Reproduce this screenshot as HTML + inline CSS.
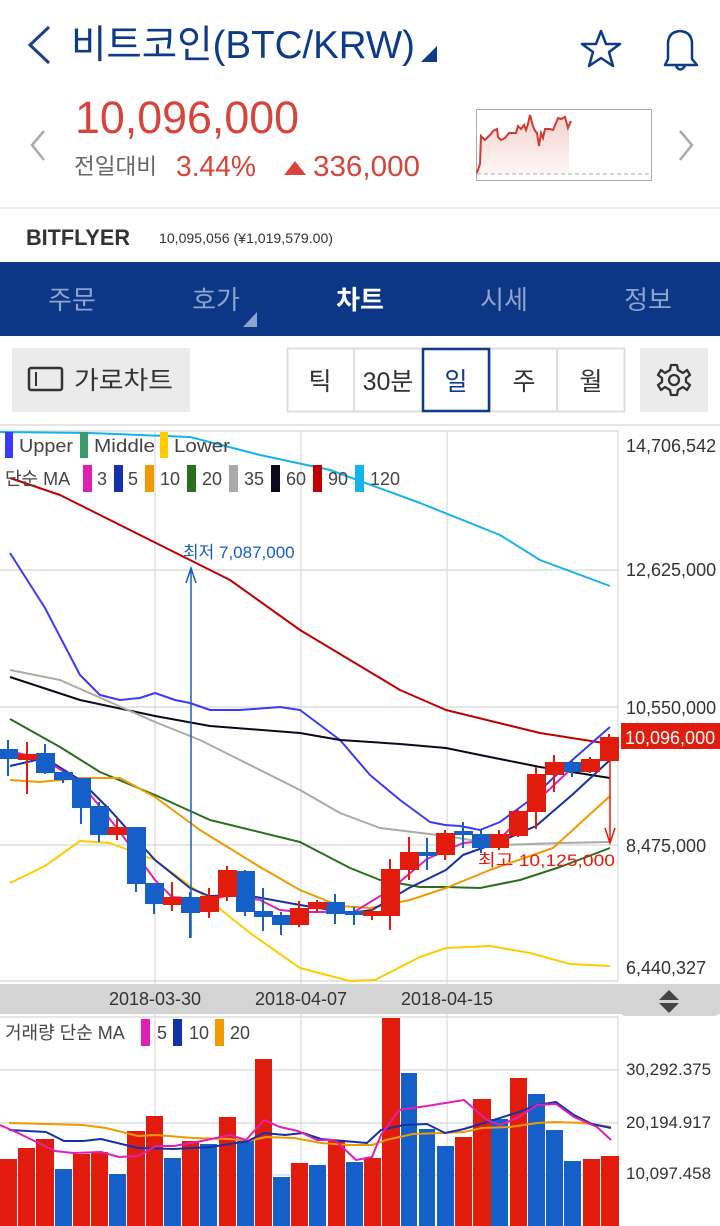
<!DOCTYPE html>
<html><head><meta charset="utf-8">
<style>
*{margin:0;padding:0;box-sizing:border-box}
body{width:720px;height:1226px;overflow:hidden;background:#fff;font-family:"Liberation Sans","Noto Sans CJK KR",sans-serif;position:relative}
.a{position:absolute;white-space:nowrap}
</style></head><body>
<svg class="a" style="left:0;top:0" width="720" height="1226" viewBox="0 0 720 1226" font-family="Liberation Sans, Noto Sans CJK KR, sans-serif">
<path d="M49 27 L30 45 L49 63" fill="none" stroke="#1a3f8f" stroke-width="3"/>
<text x="71" y="58" font-size="39" fill="#0e3a8a" textLength="344" lengthAdjust="spacingAndGlyphs">비트코인(BTC/KRW)</text>
<path d="M421 62 L437 62 L437 46 Z" fill="#0e3a8a"/>
<path d="M601 31 L606 44 L620 44 L609 52 L613 66 L601 58 L589 66 L593 52 L582 44 L596 44 Z" fill="none" stroke="#0e3a8a" stroke-width="2.5" stroke-linejoin="round"/>
<path d="M665 65 L668 59 L668 44 Q668 32 680 31 Q692 32 692 44 L692 59 L697 65 Z M676 66 Q680 73 685 66" fill="none" stroke="#0e3a8a" stroke-width="2.5" stroke-linejoin="round"/>
<path d="M44 131 L32 145 L44 160" fill="none" stroke="#aaa" stroke-width="2.5"/>
<path d="M680 131 L692 145 L680 160" fill="none" stroke="#aaa" stroke-width="2.5"/>
<text x="75" y="133" font-size="45" fill="#d9443a" textLength="224" lengthAdjust="spacingAndGlyphs">10,096,000</text>
<text x="74" y="174" font-size="22" fill="#666" textLength="83" lengthAdjust="spacingAndGlyphs">전일대비</text>
<text x="176" y="176" font-size="29" fill="#d9443a" textLength="80" lengthAdjust="spacingAndGlyphs">3.44%</text>
<path d="M284 175 L295 161 L306 175 Z" fill="#d9443a"/>
<text x="313" y="176" font-size="29" fill="#d9443a" textLength="107" lengthAdjust="spacingAndGlyphs">336,000</text>
<rect x="476.5" y="109.5" width="175" height="71" fill="#fff" stroke="#aaa"/>
<defs><linearGradient id="g" x1="0" y1="0" x2="0" y2="1"><stop offset="0" stop-color="#f3d3cf"/><stop offset="1" stop-color="#fdf5f4"/></linearGradient></defs>
<path d="M477 173 L480 164 L481 136 L485 140 L491 134 L493 131 L497 129 L498 137 L501 140 L505 138 L509 133 L513 133 L516 133 L518 126 L521 129 L524 125 L526 130 L528 124 L530 115 L533 126 L535 131 L537 133 L539 146 L541 133 L543 138 L545 129 L550 129 L553 130 L556 123 L558 118 L561 119 L565 117 L568 128 L571 121 L569 121 L569 173 Z" fill="url(#g)"/>
<path d="M477 173 L480 164 L481 136 L485 140 L491 134 L493 131 L497 129 L498 137 L501 140 L505 138 L509 133 L513 133 L516 133 L518 126 L521 129 L524 125 L526 130 L528 124 L530 115 L533 126 L535 131 L537 133 L539 146 L541 133 L543 138 L545 129 L550 129 L553 130 L556 123 L558 118 L561 119 L565 117 L568 128 L571 121" fill="none" stroke="#d23a2f" stroke-width="2"/>
<line x1="477" y1="174" x2="651" y2="174" stroke="#aaa" stroke-dasharray="4,3"/>
<rect x="0" y="207" width="720" height="2" fill="#eee"/>
<text x="26" y="245" font-size="22" font-weight="bold" fill="#333" textLength="104" lengthAdjust="spacingAndGlyphs">BITFLYER</text>
<text x="159" y="243" font-size="14" fill="#333" textLength="174" lengthAdjust="spacingAndGlyphs">10,095,056 (¥1,019,579.00)</text>
<rect x="0" y="262" width="720" height="74" fill="#0b3786"/>
<g font-size="26" fill="#8ea4cc" text-anchor="middle">
<text x="72" y="309">주문</text><text x="216" y="309">호가</text><text x="504" y="309">시세</text><text x="648" y="309">정보</text></g>
<text x="360" y="309" font-size="26" fill="#fff" font-weight="bold" text-anchor="middle">차트</text>
<path d="M243 327 L257 327 L257 312 Z" fill="#8ea4cc"/>
<rect x="12" y="348" width="178" height="64" fill="#ebebeb"/>
<rect x="29" y="368" width="33" height="22" rx="2" fill="none" stroke="#333" stroke-width="2.5"/>
<line x1="36" y1="372" x2="36" y2="386" stroke="#333" stroke-width="2"/>
<text x="74" y="389" font-size="25" fill="#333" textLength="99" lengthAdjust="spacingAndGlyphs">가로차트</text>
<rect x="287.5" y="348.5" width="337" height="63" fill="#fff" stroke="#ddd" stroke-width="2"/>
<line x1="354" y1="349" x2="354" y2="411" stroke="#ddd" stroke-width="2"/>
<line x1="557" y1="349" x2="557" y2="411" stroke="#ddd" stroke-width="2"/>
<line x1="490" y1="349" x2="490" y2="411" stroke="#ddd" stroke-width="2"/>
<rect x="423" y="349" width="66" height="62" fill="none" stroke="#0e3a8a" stroke-width="2.5"/>
<g font-size="25" fill="#333" text-anchor="middle"><text x="320" y="390">틱</text><text x="388" y="390">30분</text><text x="524" y="390">주</text><text x="591" y="390">월</text></g>
<text x="456" y="390" font-size="25" fill="#0e3a8a" text-anchor="middle">일</text>
<rect x="640" y="348" width="68" height="64" fill="#ebebeb"/>
<g transform="translate(674,380)" fill="none" stroke="#333" stroke-width="2.3">
<circle r="5"/>
<path d="M-3 -15 L3 -15 L4 -10 L9 -7 L13 -10 L16 -5 L12 -2 L12 2 L16 5 L13 10 L9 7 L4 10 L3 15 L-3 15 L-4 10 L-9 7 L-13 10 L-16 5 L-12 2 L-12 -2 L-16 -5 L-13 -10 L-9 -7 L-4 -10 Z" stroke-linejoin="round"/></g>
<rect x="0" y="424" width="720" height="2" fill="#e6e6e6"/>
<g stroke="#d8d8d8" stroke-width="1.2">
<line x1="0" y1="431" x2="618" y2="431"/>
<line x1="0" y1="570" x2="618" y2="570"/><line x1="0" y1="707" x2="618" y2="707"/><line x1="0" y1="845" x2="618" y2="845"/>
<line x1="0" y1="981" x2="618" y2="981"/>
<line x1="155" y1="431" x2="155" y2="1224"/><line x1="301" y1="431" x2="301" y2="1224"/><line x1="447" y1="431" x2="447" y2="1224"/>
<line x1="618" y1="431" x2="618" y2="981"/>
<line x1="618" y1="1016" x2="618" y2="1226"/>
<line x1="0" y1="1070" x2="618" y2="1070"/><line x1="0" y1="1123" x2="618" y2="1123"/><line x1="0" y1="1175" x2="618" y2="1175"/>
<line x1="0" y1="1017" x2="618" y2="1017"/>
</g>
<g font-size="18" fill="#333"><text x="626" y="452">14,706,542</text><text x="626" y="576">12,625,000</text><text x="626" y="714">10,550,000</text><text x="626" y="852">8,475,000</text><text x="626" y="974">6,440,327</text></g>
<g fill="none" stroke-width="2" stroke-linejoin="round">
<polyline stroke="#13b3ec" points="0,432 90,433 190,437 260,455 330,470 420,503 500,535 540,560 610,586"/>
<polyline stroke="#c00000" points="10,478 60,495 100,515 150,540 230,580 300,630 350,660 400,690 446,710 540,733 610,744"/>
<polyline stroke="#3a3aff" points="10,553 45,608 80,675 100,695 120,700 140,698 155,693 175,700 190,703 210,710 240,710 280,707 300,710 340,740 370,775 400,800 430,822 445,825 460,826 480,830 500,822 530,800 570,762 610,727"/>
<polyline stroke="#0a0a1a" points="10,677 80,700 155,716 210,726 300,733 340,740 400,744 446,748 480,755 540,767 610,778"/>
<polyline stroke="#aaaaaa" points="10,670 60,680 155,722 200,740 240,760 300,790 340,813 380,828 446,836 500,845 560,843 610,842"/>
<polyline stroke="#2a6e1f" points="10,719 60,747 100,772 155,795 210,820 300,842 350,868 380,880 420,887 446,887 480,888 520,880 560,867 610,848"/>
<polyline stroke="#ee9a00" points="10,780 40,782 80,778 120,778 155,797 200,830 260,867 300,890 340,906 370,908 410,900 446,888 490,870 553,848 610,796"/>
<polyline stroke="#ffcc00" points="10,883 45,866 80,841 110,843 155,860 200,893 250,933 300,968 350,981 375,980 420,957 446,948 490,946 530,953 570,964 610,966"/>
<polyline stroke="#1530a8" points="10,766 45,758 80,780 110,810 155,860 190,888 209,896 245,895 300,905 350,913 372,910 409,888 446,870 463,855 499,842 536,826 572,795 610,760"/>
<polyline stroke="#e020b0" points="10,751 45,760 80,782 117,828 155,880 172,897 209,900 230,895 260,900 280,910 300,912 354,912 390,890 427,859 463,843 499,840 536,802 572,768 610,757"/>
</g>
<g stroke-width="2">
<g stroke="#1560c8" fill="#1560c8">
<line x1="8" y1="740" x2="8" y2="776"/><rect x="0" y="750" width="17" height="8"/>
<line x1="45" y1="744" x2="45" y2="774"/><rect x="37" y="754" width="17" height="18"/>
<line x1="63" y1="770" x2="63" y2="783"/><rect x="55" y="773" width="17" height="6"/>
<line x1="81" y1="779" x2="81" y2="824"/><rect x="73" y="779" width="17" height="28"/>
<line x1="99" y1="802" x2="99" y2="842"/><rect x="91" y="807" width="17" height="27"/>
<line x1="136" y1="828" x2="136" y2="892"/><rect x="128" y="828" width="17" height="55"/>
<line x1="154" y1="884" x2="154" y2="914"/><rect x="146" y="884" width="17" height="19"/>
<line x1="190" y1="892" x2="190" y2="938"/><rect x="182" y="898" width="17" height="14"/>
<line x1="245" y1="870" x2="245" y2="916"/><rect x="237" y="872" width="17" height="39"/>
<line x1="263" y1="888" x2="263" y2="931"/><rect x="255" y="912" width="17" height="4"/>
<line x1="281" y1="912" x2="281" y2="935"/><rect x="273" y="916" width="17" height="8"/>
<line x1="335" y1="894" x2="335" y2="924"/><rect x="327" y="903" width="17" height="10"/>
<line x1="354" y1="907" x2="354" y2="925"/><rect x="346" y="912" width="17" height="2"/>
<line x1="427" y1="838" x2="427" y2="870"/><rect x="419" y="853" width="17" height="2"/>
<line x1="463" y1="822" x2="463" y2="848"/><rect x="455" y="832" width="17" height="2"/>
<line x1="481" y1="830" x2="481" y2="853"/><rect x="473" y="835" width="17" height="12"/>
<line x1="572" y1="760" x2="572" y2="777"/><rect x="564" y="763" width="17" height="8"/>
</g>
<g stroke="#e21c0d" fill="#e21c0d">
<line x1="27" y1="742" x2="27" y2="794"/><rect x="19" y="755" width="17" height="4"/>
<line x1="117" y1="819" x2="117" y2="840"/><rect x="109" y="828" width="17" height="6"/>
<line x1="172" y1="882" x2="172" y2="911"/><rect x="164" y="898" width="17" height="6"/>
<line x1="209" y1="888" x2="209" y2="918"/><rect x="201" y="897" width="17" height="14"/>
<line x1="227" y1="866" x2="227" y2="901"/><rect x="219" y="871" width="17" height="25"/>
<line x1="299" y1="901" x2="299" y2="927"/><rect x="291" y="909" width="17" height="15"/>
<line x1="317" y1="900" x2="317" y2="913"/><rect x="309" y="903" width="17" height="5"/>
<line x1="372" y1="909" x2="372" y2="920"/><rect x="364" y="912" width="17" height="3"/>
<line x1="390" y1="859" x2="390" y2="930"/><rect x="382" y="870" width="17" height="45"/>
<line x1="409" y1="837" x2="409" y2="880"/><rect x="401" y="853" width="17" height="16"/>
<line x1="445" y1="830" x2="445" y2="860"/><rect x="437" y="834" width="17" height="20"/>
<line x1="499" y1="830" x2="499" y2="850"/><rect x="491" y="835" width="17" height="12"/>
<line x1="518" y1="810" x2="518" y2="837"/><rect x="510" y="812" width="17" height="23"/>
<line x1="536" y1="767" x2="536" y2="829"/><rect x="528" y="775" width="17" height="36"/>
<line x1="554" y1="755" x2="554" y2="792"/><rect x="546" y="763" width="17" height="11"/>
<line x1="590" y1="757" x2="590" y2="773"/><rect x="582" y="760" width="17" height="11"/>
<line x1="609" y1="734" x2="609" y2="760"/><rect x="601" y="738" width="17" height="22"/>
</g>
</g>
<line x1="191" y1="938" x2="191" y2="569" stroke="#1560c8" stroke-width="1.5"/>
<path d="M186 583 L191 568 L196 583" fill="none" stroke="#1560c8" stroke-width="1.5"/>
<text x="183" y="558" font-size="17" fill="#1560c8">최저 7,087,000</text>
<line x1="610" y1="760" x2="610" y2="843" stroke="#e21c0d" stroke-width="1.5"/>
<path d="M605 828 L610 843 L615 828" fill="none" stroke="#e21c0d" stroke-width="1.5"/>
<text x="615" y="866" font-size="17" fill="#e21c0d" text-anchor="end" textLength="137" lengthAdjust="spacingAndGlyphs">최고 10,125,000</text>
<rect x="621" y="723" width="99" height="26" fill="#e21c0d"/>
<text x="625" y="744" font-size="18" fill="#fff">10,096,000</text>
<g font-size="18" fill="#444">
<rect x="5" y="432" width="8" height="26" fill="#3a3aff"/><text x="19" y="452" textLength="54" lengthAdjust="spacingAndGlyphs">Upper</text>
<rect x="80" y="432" width="8" height="26" fill="#3a9a6a"/><text x="94" y="452" textLength="61" lengthAdjust="spacingAndGlyphs">Middle</text>
<rect x="160" y="432" width="8" height="26" fill="#ffcc00"/><text x="174" y="452" textLength="56" lengthAdjust="spacingAndGlyphs">Lower</text>
<text x="5" y="485">단순 MA</text>
<rect x="83" y="465" width="9" height="27" fill="#e020b0"/><text x="97" y="485">3</text>
<rect x="114" y="465" width="9" height="27" fill="#1530a8"/><text x="128" y="485">5</text>
<rect x="145" y="465" width="9" height="27" fill="#ee9a00"/><text x="160" y="485">10</text>
<rect x="187" y="465" width="9" height="27" fill="#2a6e1f"/><text x="202" y="485">20</text>
<rect x="229" y="465" width="9" height="27" fill="#aaa"/><text x="244" y="485">35</text>
<rect x="271" y="465" width="9" height="27" fill="#0a0a1a"/><text x="286" y="485">60</text>
<rect x="313" y="465" width="9" height="27" fill="#c00000"/><text x="328" y="485">90</text>
<rect x="355" y="465" width="9" height="27" fill="#13b3ec"/><text x="370" y="485">120</text>
</g>
<rect x="0" y="984" width="720" height="30" fill="#d4d4d4"/>
<rect x="620" y="984" width="100" height="32" rx="6" fill="#d4d4d4"/>
<path d="M659 1000 L669 990 L679 1000 Z M659 1003 L679 1003 L669 1013 Z" fill="#444"/>
<g font-size="18" fill="#333" text-anchor="middle"><text x="155" y="1005">2018-03-30</text><text x="301" y="1005">2018-04-07</text><text x="447" y="1005">2018-04-15</text></g>
<g fill="#e21c0d">
<rect x="0" y="1159" width="17" height="67"/><rect x="18" y="1148" width="17" height="78"/><rect x="36" y="1139" width="18" height="87"/>
<rect x="73" y="1154" width="17" height="72"/><rect x="91" y="1152" width="17" height="74"/>
<rect x="127" y="1131" width="18" height="95"/><rect x="146" y="1116" width="17" height="110"/>
<rect x="182" y="1141" width="17" height="85"/><rect x="219" y="1117" width="17" height="109"/>
<rect x="255" y="1059" width="17" height="167"/><rect x="291" y="1163" width="17" height="63"/>
<rect x="328" y="1141" width="17" height="85"/><rect x="364" y="1158" width="17" height="68"/>
<rect x="382" y="1018" width="18" height="208"/><rect x="455" y="1137" width="17" height="89"/>
<rect x="473" y="1099" width="18" height="127"/><rect x="510" y="1078" width="17" height="148"/>
<rect x="583" y="1159" width="17" height="67"/><rect x="601" y="1156" width="18" height="70"/>
</g>
<g fill="#1560c8">
<rect x="55" y="1169" width="17" height="57"/><rect x="109" y="1174" width="17" height="52"/>
<rect x="164" y="1158" width="17" height="68"/><rect x="200" y="1144" width="17" height="82"/>
<rect x="237" y="1141" width="17" height="85"/><rect x="273" y="1177" width="17" height="49"/>
<rect x="309" y="1165" width="17" height="61"/><rect x="346" y="1162" width="17" height="64"/>
<rect x="401" y="1073" width="16" height="153"/><rect x="419" y="1129" width="16" height="97"/>
<rect x="437" y="1146" width="17" height="80"/><rect x="491" y="1119" width="17" height="107"/>
<rect x="528" y="1094" width="17" height="132"/><rect x="546" y="1130" width="17" height="96"/>
<rect x="564" y="1161" width="17" height="65"/>
</g>
<g fill="none" stroke-width="2" stroke-linejoin="round">
<polyline stroke="#ee9a00" points="9,1123 83,1125 106,1128 138,1136 156,1135 193,1138 230,1139 248,1141 266,1137 294,1138 321,1143 349,1145 372,1145 386,1140 413,1134 441,1133 464,1132 482,1128 510,1127 537,1123 556,1122 583,1123 611,1127"/>
<polyline stroke="#1530a8" points="9,1130 46,1132 64,1141 83,1141 101,1139 138,1148 174,1149 211,1147 248,1141 264,1133 285,1135 303,1133 321,1139 367,1143 381,1130 404,1125 427,1124 445,1133 464,1129 487,1122 519,1112 537,1105 556,1102 574,1115 592,1124 611,1128"/>
<polyline stroke="#e020b0" points="0,1125 18,1133 55,1151 73,1153 101,1152 119,1157 138,1156 156,1146 174,1146 202,1141 230,1135 246,1140 264,1120 280,1127 298,1131 317,1140 335,1140 356,1160 372,1157 381,1135 399,1110 427,1106 464,1100 487,1120 500,1125 519,1117 537,1105 556,1104 574,1117 597,1127 611,1140"/>
</g>
<g font-size="18" fill="#444">
<text x="5" y="1039">거래량 단순 MA</text>
<rect x="141" y="1019" width="9" height="27" fill="#e020b0"/><text x="157" y="1039">5</text>
<rect x="173" y="1019" width="9" height="27" fill="#1530a8"/><text x="189" y="1039">10</text>
<rect x="215" y="1019" width="9" height="27" fill="#ee9a00"/><text x="230" y="1039">20</text>
</g>
<g font-size="17" fill="#333"><text x="626" y="1075">30,292.375</text><text x="626" y="1128">20,194.917</text><text x="626" y="1179">10,097.458</text></g>
</svg>
</body></html>
